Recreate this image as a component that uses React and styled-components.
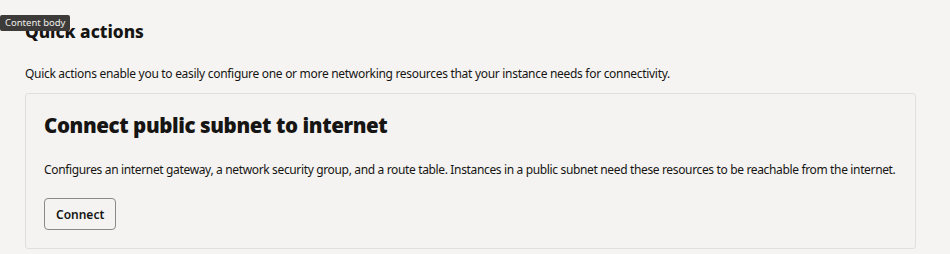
import React from 'react'
import styled, { createGlobalStyle } from 'styled-components'

const GlobalStyle = createGlobalStyle`
    html, body {
        margin: 0;
        background: #f5f4f2;
        font-family: "Noto Sans", "Open Sans", sans-serif;
        color: #161513;
    }
`

const Page = styled.main`
    position: relative;
    padding: 20px 34px 0 25px;
`

const Tooltip = styled.div`
    position: absolute;
    left: 0;
    top: 15px;
    padding: 1px 5px;
    background: #3c3b39;
    color: #f0efed;
    font-size: 9.5px;
    line-height: 14px;
    border-radius: 2px;
`

const Heading = styled.h1`
    margin: 0;
    font-size: 17.3px;
    font-weight: 800;
    line-height: 24px;
`

const Intro = styled.p`
    margin: 21px 0 10px;
    font-size: 12px;
    letter-spacing: -0.3px;
    line-height: 18px;
`

const Card = styled.section`
    background: #f4f3f1;
    border: 1px solid #e0dfdb;
    border-radius: 3px;
    padding: 16px 12px 18px 18px;
`

const CardTitle = styled.h2`
    margin: 0;
    font-size: 20.5px;
    font-weight: 900;
    letter-spacing: -0.4px;
    line-height: 30px;
`

const CardText = styled.p`
    margin: 21px 0 19px;
    font-size: 12px;
    letter-spacing: -0.35px;
    line-height: 18px;
`

const Button = styled.button`
    height: 32px;
    padding: 0 11px;
    background: transparent;
    border: 1px solid #8b8986;
    border-radius: 4px;
    font-family: inherit;
    font-size: 12px;
    font-weight: 600;
    color: #161513;
`

export default function App() {
    return (
        <>
            <GlobalStyle />
            <Page>
                <Tooltip>Content body</Tooltip>
                <Heading>Quick actions</Heading>
                <Intro>
                    Quick actions enable you to easily configure one or more networking resources that your instance needs for connectivity.
                </Intro>
                <Card>
                    <CardTitle>Connect public subnet to internet</CardTitle>
                    <CardText>
                        Configures an internet gateway, a network security group, and a route table. Instances in a public subnet need these resources to be reachable from the internet.
                    </CardText>
                    <Button>Connect</Button>
                </Card>
            </Page>
        </>
    )
}
